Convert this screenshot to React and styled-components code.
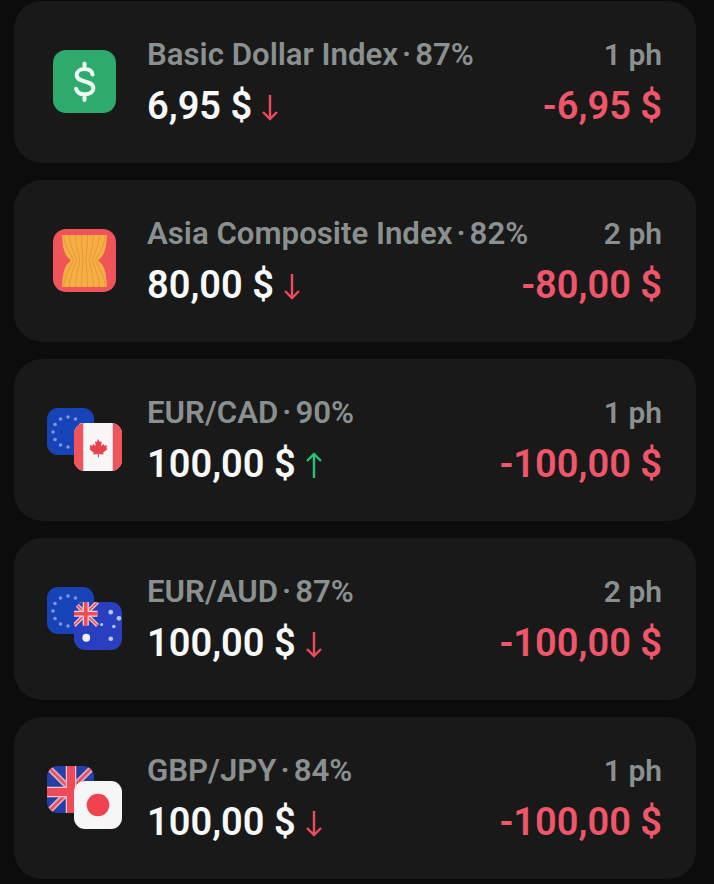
import React from 'react';
import styled, { createGlobalStyle } from 'styled-components';

const GlobalStyle = createGlobalStyle`
  html, body {
    margin: 0;
    padding: 0;
    background: #0c0c0c;
  }
  body {
    font-family: Roboto, 'Liberation Sans', sans-serif;
  }
`;

const List = styled.div`
  display: flex;
  flex-direction: column;
  gap: 17px;
  width: 714px;
  height: 884px;
  box-sizing: border-box;
  padding: 1px 18px 0 14px;
  overflow: hidden;
`;

const Card = styled.div`
  display: flex;
  align-items: center;
  flex: none;
  height: 162px;
  box-sizing: border-box;
  padding: 0 34px 0 33px;
  background: #191919;
  border-radius: 28px;
`;

const IconSlot = styled.div`
  position: relative;
  flex: none;
  width: 100px;
  height: 64px;
`;

const Square = styled.div`
  position: absolute;
  left: ${(p) => p.$left}px;
  top: ${(p) => p.$top}px;
  width: ${(p) => p.$size}px;
  height: ${(p) => p.$size}px;
  border-radius: ${(p) => p.$radius}px;
  overflow: hidden;
  svg {
    display: block;
    width: 100%;
    height: 100%;
  }
`;

const Body = styled.div`
  flex: 1;
  display: flex;
  flex-direction: column;
  gap: 13px;
  padding-top: 1px;
`;

const Row = styled.div`
  display: flex;
  justify-content: space-between;
  align-items: center;
  white-space: nowrap;
`;

const Title = styled.div`
  font-size: 31.2px;
  line-height: 34px;
  font-weight: 600;
  color: #8a9090;
`;

const Dot = styled.span`
  margin: 0 4px;
`;

const Age = styled.div`
  font-size: 30px;
  line-height: 34px;
  font-weight: 600;
  color: #8a9090;
`;

const Amount = styled.div`
  display: flex;
  align-items: center;
  gap: 9px;
  font-size: 38px;
  line-height: 42px;
  font-weight: 600;
  color: #f7f9f9;
`;

const Loss = styled.div`
  font-size: 38px;
  line-height: 42px;
  font-weight: 600;
  color: #f0566a;
`;

const Arrow = styled.svg`
  flex: none;
  width: 18px;
  height: 27px;
  margin-top: 2px;
`;

const RED = '#ee4a5e';
const GREEN = '#27c274';

function TrendArrow({ up }) {
  return (
    <Arrow viewBox="0 0 18 27" fill="none" stroke={up ? GREEN : RED} strokeWidth="2.4">
      {up ? (
        <path d="M9 26V2M2 9l7-7 7 7" />
      ) : (
        <path d="M9 1v24M2 18l7 7 7-7" />
      )}
    </Arrow>
  );
}

function DollarIcon() {
  return (
    <svg viewBox="0 0 63 63">
      <rect width="63" height="63" fill="#2eaa6c" />
      <path
        d="M39.5 24.5c-.6-3.4-3.8-5.4-8-5.4-4.6 0-7.8 2.5-7.8 6 0 8.600 16.600 4.200 16.600 13 0 3.700-3.500 6.200-8.400 6.200-4.600 0-8-2.100-8.800-5.600M31.500 13.500v5.600M31.500 44.500v5.600"
        fill="none"
        stroke="#eef8f2"
        strokeWidth="4"
        strokeLinecap="round"
        strokeLinejoin="round"
      />
    </svg>
  );
}

function AseanIcon() {
  const stalks = [-14, -10, -6, -2, 2, 6, 10, 14];
  return (
    <svg viewBox="0 0 63 63">
      <rect width="63" height="63" fill="#f0535a" />
      <path
        d="M9 6h45c-1 14-2 20-9 25.500C52 37 53 43 54 58H9c1-15 2-21 9-26.500C11 26 10 20 9 6z"
        fill="#f5b044"
      />
      {stalks.map((s) => (
        <path
          key={s}
          d={`M${31.5 + s * 1.5} 6C${31.5 + s * 1.4} 20 ${31.5 + s * 0.9} 26 ${31.5 + s * 0.8} 31.5C${31.5 + s * 0.9} 37 ${31.5 + s * 1.4} 43 ${31.5 + s * 1.5} 58`}
          fill="none"
          stroke="#e58f3a"
          strokeWidth="0.8"
        />
      ))}
    </svg>
  );
}

function EuFlag() {
  const stars = [];
  for (let i = 0; i < 12; i++) {
    const a = (i * Math.PI) / 6 - Math.PI / 2;
    stars.push(
      <circle key={i} cx={21 + 15 * Math.cos(a)} cy={24 + 15 * Math.sin(a)} r="1.8" fill="#7f98dc" />
    );
  }
  return (
    <svg viewBox="0 0 47 47">
      <rect width="47" height="47" fill="#1643b8" />
      {stars}
    </svg>
  );
}

function CanadaFlag() {
  return (
    <svg viewBox="0 0 47 47">
      <rect width="47" height="47" fill="#f8f6f6" />
      <rect width="9" height="47" fill="#f0535a" />
      <rect x="38" width="9" height="47" fill="#f0535a" />
      <path
        transform="translate(4.700 5) scale(0.8)"
        d="M23.500 13l2.200 4 2.400-1-.8 6 3-2.600 1 2.200 3.400-.5-1 3.600 1.600 1-5.600 4.600.6 2-5.600-.6v4h-1.400v-4l-5.600.6.6-2-5.600-4.600 1.600-1-1-3.600 3.400.5 1-2.200 3 2.600-.8-6 2.400 1z"
        fill="#e8424c"
      />
    </svg>
  );
}

function AustraliaFlag() {
  return (
    <svg viewBox="0 0 47 47">
      <rect width="47" height="47" fill="#2a3fc0" />
      <rect width="23" height="23" fill="#2a3fb0" />
      <path d="M0 0l23 23M23 0L0 23" stroke="#e8c4cc" strokeWidth="4" />
      <path d="M0 0l23 23M23 0L0 23" stroke="#ee5360" strokeWidth="1.600" />
      <path d="M11.500 0v23M0 11.500h23" stroke="#f2d6da" strokeWidth="6" />
      <path d="M11.500 0v23M0 11.500h23" stroke="#ee4a58" strokeWidth="3.600" />
      <circle cx="12" cy="35" r="3.800" fill="#eef1fb" />
      <circle cx="36" cy="10" r="2.300" fill="#b9c6f0" />
      <circle cx="44" cy="16" r="2.300" fill="#b9c6f0" />
      <circle cx="39" cy="24" r="1.700" fill="#b9c6f0" />
      <circle cx="36" cy="36" r="2.300" fill="#b9c6f0" />
      <circle cx="27" cy="22" r="1.500" fill="#b9c6f0" />
    </svg>
  );
}

function UkFlag() {
  return (
    <svg viewBox="0 0 47 47">
      <rect width="47" height="47" fill="#2440a8" />
      <path d="M0 0l47 47M47 0L0 47" stroke="#d9aebd" strokeWidth="6" />
      <path d="M0 0l47 47M47 0L0 47" stroke="#ee4f5c" strokeWidth="2.600" />
      <path d="M24 0v47M0 26h47" stroke="#efc5cb" strokeWidth="10.500" />
      <path d="M24 0v47M0 26h47" stroke="#ee4a58" strokeWidth="8" />
    </svg>
  );
}

function JapanFlag() {
  return (
    <svg viewBox="0 0 48 48">
      <rect width="48" height="48" fill="#f7f6f6" />
      <circle cx="24" cy="24" r="11.300" fill="#f0434f" />
    </svg>
  );
}

function PairIcon({ back, front }) {
  return (
    <IconSlot>
      <Square $left={0} $top={0} $size={47} $radius={11}>{back}</Square>
      <Square $left={27} $top={15} $size={48} $radius={11}>{front}</Square>
    </IconSlot>
  );
}

function SingleIcon({ children }) {
  return (
    <IconSlot>
      <Square $left={6} $top={0} $size={63} $radius={13}>{children}</Square>
    </IconSlot>
  );
}

const trades = [
  { name: 'Basic Dollar Index', pct: '87%', age: '1 ph', amount: '6,95 $', loss: '-6,95 $', icon: <SingleIcon><DollarIcon /></SingleIcon> },
  { name: 'Asia Composite Index', pct: '82%', age: '2 ph', amount: '80,00 $', loss: '-80,00 $', icon: <SingleIcon><AseanIcon /></SingleIcon> },
  { name: 'EUR/CAD', pct: '90%', age: '1 ph', amount: '100,00 $', loss: '-100,00 $', up: true, icon: <PairIcon back={<EuFlag />} front={<CanadaFlag />} /> },
  { name: 'EUR/AUD', pct: '87%', age: '2 ph', amount: '100,00 $', loss: '-100,00 $', icon: <PairIcon back={<EuFlag />} front={<AustraliaFlag />} /> },
  { name: 'GBP/JPY', pct: '84%', age: '1 ph', amount: '100,00 $', loss: '-100,00 $', icon: <PairIcon back={<UkFlag />} front={<JapanFlag />} /> },
];

export default function App() {
  return (
    <>
      <GlobalStyle />
      <List>
        {trades.map((t) => (
          <Card key={t.name}>
            {t.icon}
            <Body>
              <Row>
                <Title>{t.name}<Dot>·</Dot>{t.pct}</Title>
                <Age>{t.age}</Age>
              </Row>
              <Row>
                <Amount>{t.amount}<TrendArrow up={t.up} /></Amount>
                <Loss>{t.loss}</Loss>
              </Row>
            </Body>
          </Card>
        ))}
      </List>
    </>
  );
}
